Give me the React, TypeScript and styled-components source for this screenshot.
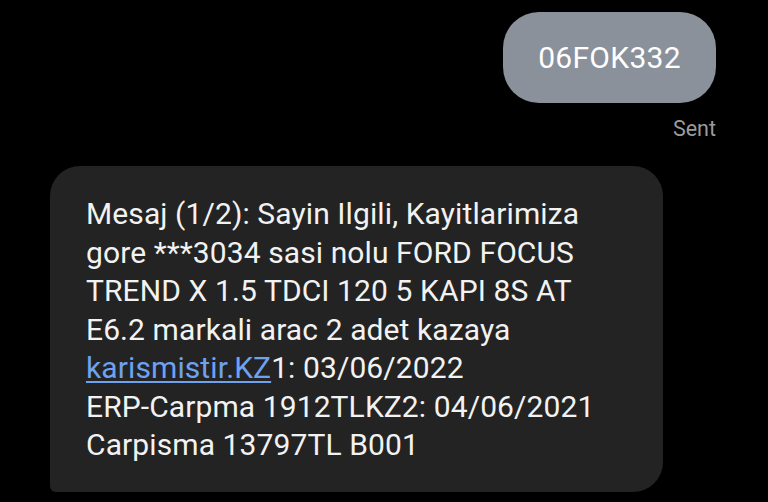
import styled, { createGlobalStyle } from 'styled-components';

const GlobalStyle = createGlobalStyle`
    html, body {
        margin: 0;
        padding: 0;
        background: #000;
        height: 100%;
        overflow: hidden;
    }
    body {
        font-family: Roboto, 'Noto Sans', sans-serif;
        -webkit-font-smoothing: antialiased;
    }
`;

const Thread = styled.div`
    width: 768px;
    height: 502px;
    display: flex;
    flex-direction: column;
    background: #000;
    box-sizing: border-box;
    padding: 12px 52px 0 50px;
`;

const SentGroup = styled.div`
    display: flex;
    flex-direction: column;
    align-items: flex-end;
`;

const SentBubble = styled.div`
    width: 213px;
    height: 91px;
    border-radius: 36px;
    background: #8a919b;
    color: #fff;
    font-size: 30px;
    display: flex;
    align-items: center;
    justify-content: center;
    letter-spacing: 0.3px;
`;

const Status = styled.div`
    margin-top: 13px;
    color: #9b9b9b;
    font-size: 21.5px;
    line-height: 26px;
`;

const ReceivedBubble = styled.div`
    margin-top: 24px;
    width: 613px;
    box-sizing: border-box;
    background: #232323;
    border-radius: 30px 30px 30px 6px;
    padding: 29px 10px 27px 36px;
    color: #f2f2f2;
    font-size: 30px;
    line-height: 38.5px;
    letter-spacing: 0.1px;
`;

const Line = styled.div`
    white-space: nowrap;
`;

const Link = styled.a`
    color: #6ea2ef;
    text-decoration: underline;
    text-underline-offset: 3px;
    text-decoration-thickness: 1.5px;
`;

const LINES = [
    'Mesaj (1/2): Sayin Ilgili, Kayitlarimiza',
    'gore ***3034 sasi nolu FORD FOCUS',
    'TREND X 1.5 TDCI 120 5 KAPI 8S AT',
    'E6.2 markali arac 2 adet kazaya',
];

export default function App() {
    return (
        <>
            <GlobalStyle />
            <Thread>
                <SentGroup>
                    <SentBubble>06FOK332</SentBubble>
                    <Status>Sent</Status>
                </SentGroup>
                <ReceivedBubble>
                    {LINES.map((line) => (
                        <Line key={line}>{line}</Line>
                    ))}
                    <Line>
                        <Link href="#">karismistir.KZ</Link>1: 03/06/2022
                    </Line>
                    <Line>ERP-Carpma 1912TLKZ2: 04/06/2021</Line>
                    <Line>Carpisma 13797TL B001</Line>
                </ReceivedBubble>
            </Thread>
        </>
    );
}
